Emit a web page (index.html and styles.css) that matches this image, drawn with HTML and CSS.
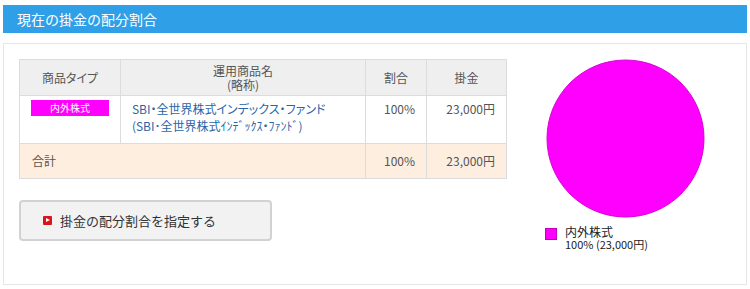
FILE: index.html
```html
<!DOCTYPE html>
<html lang="ja">
<head>
    <meta charset="UTF-8">
    <meta name="viewport" content="width=device-width, initial-scale=1.0">
    <link rel="stylesheet" href="styles.css">
    <title>現在の掛金の配分割合</title>
</head>
<body>
    <h2 class="section-title">現在の掛金の配分割合</h2>
    <div class="panel">
        <div class="left">
            <table class="alloc">
                <thead>
                    <tr>
                        <th class="col-type">商品タイプ</th>
                        <th class="col-name">運用商品名<br>(略称)</th>
                        <th class="col-rate">割合</th>
                        <th class="col-amount">掛金</th>
                    </tr>
                </thead>
                <tbody>
                    <tr class="row-item">
                        <td class="type"><span class="badge">内外株式</span></td>
                        <td class="name"><a href="#">SBI・全世界株式インデックス・ファンド<br>(SBI･全世界株式ｲﾝﾃﾞｯｸｽ・ﾌｧﾝﾄﾞ)</a></td>
                        <td class="num">100%</td>
                        <td class="num">23,000円</td>
                    </tr>
                </tbody>
                <tfoot>
                    <tr class="row-total">
                        <td colspan="2">合計</td>
                        <td class="num">100%</td>
                        <td class="num">23,000円</td>
                    </tr>
                </tfoot>
            </table>
            <button type="button" class="btn"><span class="btn-icon"></span>掛金の配分割合を指定する</button>
        </div>
        <div class="chart">
            <svg class="pie" width="159" height="159" viewBox="0 0 159 159">
                <circle cx="79.5" cy="79.5" r="78.5" fill="#ff00ff" stroke="#d800d8" stroke-width="1"/>
            </svg>
            <div class="legend">
                <span class="legend-box"></span>
                <div class="legend-text">
                    <div class="legend-label">内外株式</div>
                    <div class="legend-value">100% (23,000円)</div>
                </div>
            </div>
        </div>
    </div>
</body>
</html>
```
FILE: styles.css
```css
body {
    margin: 0;
    padding: 5px 3px 0 3px;
    font-family: "Noto Sans CJK JP", "Noto Sans", sans-serif;
    color: #555;
    background-color: #fff;
}

.section-title {
    margin: 0 0 10px 0;
    height: 28px;
    line-height: 28px;
    padding-left: 14px;
    font-size: 14px;
    font-weight: normal;
    color: #fff;
    background-color: #2f9fe7;
}

.panel {
    display: flex;
    border: 1px solid #e6e6e6;
    padding: 15px 15px 33px 15px;
}

.left {
    width: 488px;
}

.alloc {
    width: 488px;
    border-collapse: collapse;
    font-size: 12px;
    font-feature-settings: "palt";
    border: 1px solid #d4d4d4;
}

.alloc th, .alloc td {
    border: 1px solid #dcdcdc;
    font-weight: normal;
    line-height: 14px;
}

.alloc th {
    height: 35px;
    padding: 0;
    background-color: #efefef;
    text-align: center;
}

.col-type { width: 100px; }
.col-name { width: 245px; }
.col-rate { width: 60px; }
.col-amount { width: 79px; }

.row-item td {
    height: 41px;
    padding: 0 11px;
    vertical-align: top;
    padding-top: 4px;
    background-color: #fff;
}

.row-item .type {
    padding: 4px 0 0 0;
    text-align: center;
}

.badge {
    display: inline-block;
    width: 78px;
    height: 16px;
    line-height: 16px;
    font-size: 10px;
    color: #fff;
    background-color: #ff00ff;
}

.name a {
    color: #2a64a8;
    text-decoration: none;
    line-height: 17px;
}

.num {
    text-align: right;
}

.row-item .num {
    padding-top: 6px;
}

.row-total td {
    height: 34px;
    padding: 0 11px 0 12px;
    background-color: #fdeee0;
}

.btn {
    display: flex;
    align-items: center;
    margin-top: 21px;
    width: 253px;
    height: 41px;
    padding: 0 0 0 22px;
    border: 2px solid #d2d2d2;
    border-radius: 4px;
    background-color: #f2f2f2;
    color: #333;
    font-family: "Noto Sans CJK JP", sans-serif;
    font-size: 13px;
    cursor: pointer;
}

.btn-icon {
    position: relative;
    width: 9px;
    height: 9px;
    margin-right: 8px;
    background-color: #d8161b;
    border-radius: 1px;
}

.btn-icon::after {
    content: "";
    position: absolute;
    left: 3px;
    top: 2px;
    border-left: 4px solid #fff;
    border-top: 2.5px solid transparent;
    border-bottom: 2.5px solid transparent;
}

.chart {
    margin-left: 39px;
    padding-top: 0;
}

.pie {
    display: block;
}

.legend {
    display: flex;
    margin-top: 8px;
    margin-left: -1px;
    color: #222;
}

.legend-box {
    width: 10px;
    height: 10px;
    margin-top: 2px;
    margin-right: 8px;
    border: 1px solid #c000c0;
    background-color: #ff00ff;
}

.legend-label {
    font-size: 12px;
    line-height: 12px;
}

.legend-value {
    font-size: 11px;
    line-height: 13px;
}
```
